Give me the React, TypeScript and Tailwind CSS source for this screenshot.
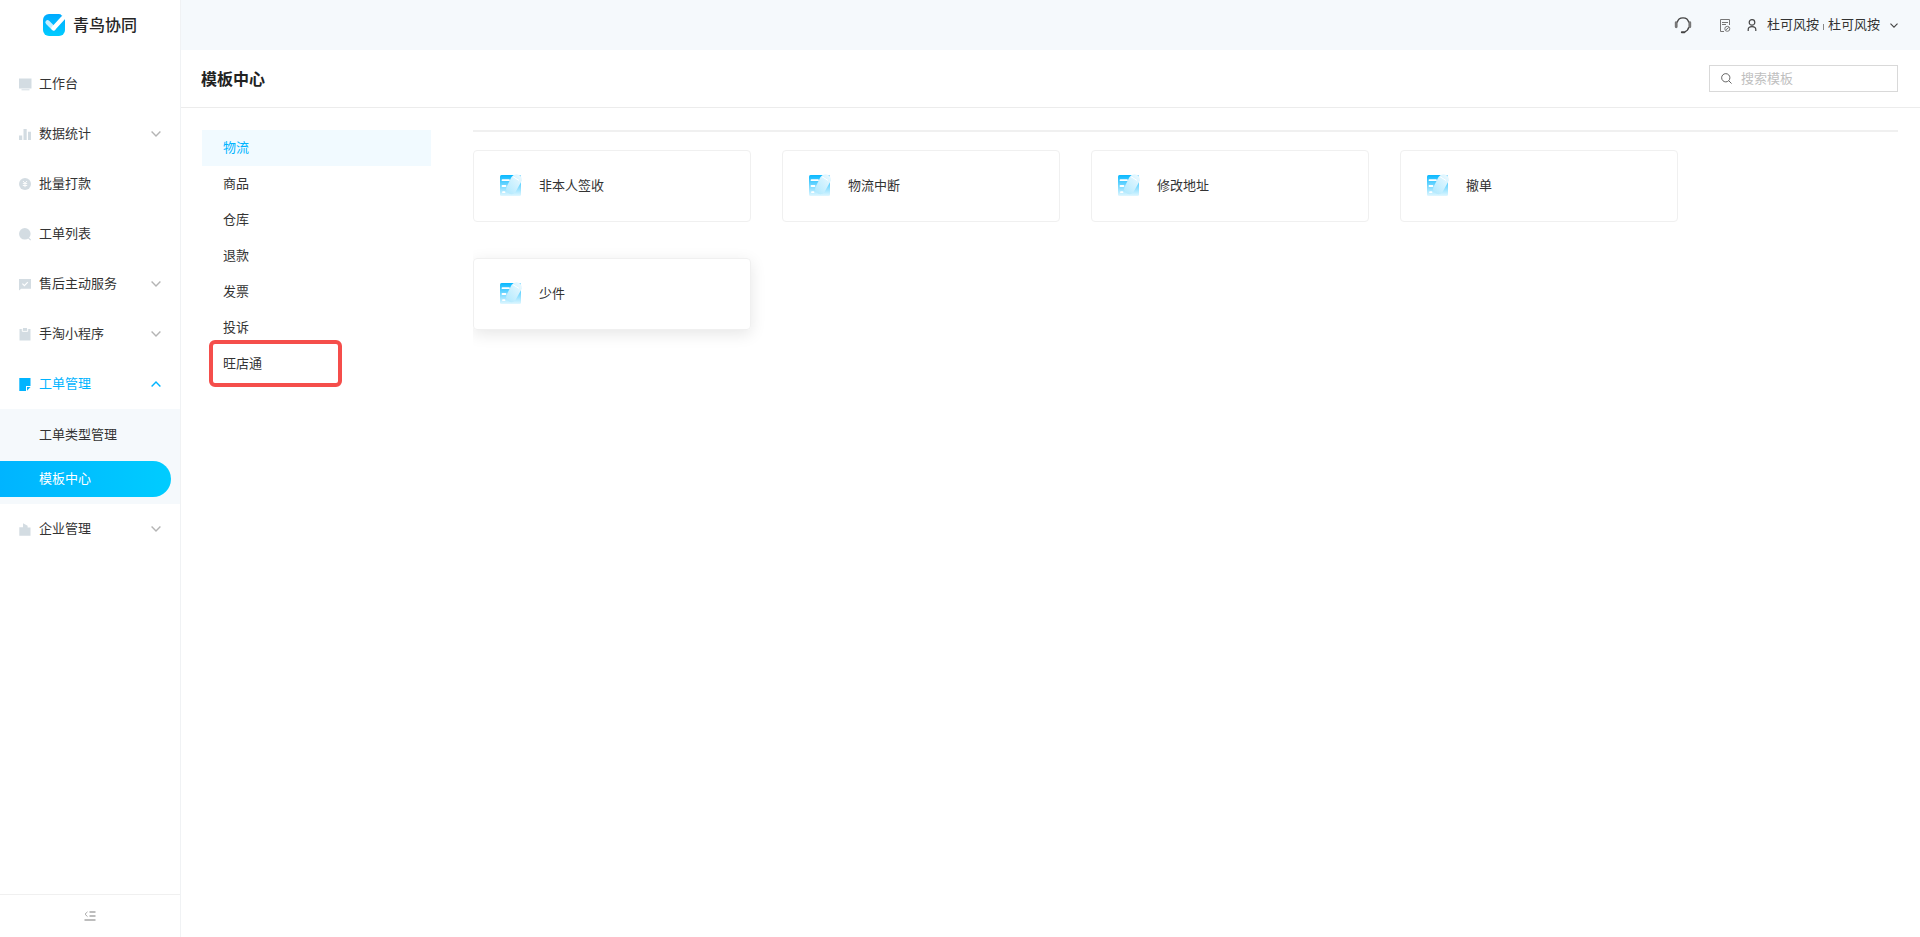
import { useState, type ReactNode } from "react";
import clsx from "clsx";

type MenuItem = {
  name: string;
  icon: ReactNode;
  expandable?: boolean;
  children?: string[];
};

const menu: MenuItem[] = [
  {
    name: "工作台",
    icon: (
      <>
        <path d="M0 0.5h12.5v10H0z" />
        <path d="M2.5 11.3h8v1h-8z" />
      </>
    ),
  },
  {
    name: "数据统计",
    icon: <path d="M0 7.5h3.2v4.5H0zM4.5 1h3.2v11H4.5zM9 3.8h3v8.2H9z" />,
    expandable: true,
  },
  {
    name: "批量打款",
    icon: (
      <>
        <circle cx="6" cy="6" r="6" />
        <path
          d="M4 3l2 2.2L8 3M3.8 5.6h4.4M3.8 7.5h4.4M6 5.2v4"
          fill="none"
          stroke="#fff"
          strokeWidth="0.9"
        />
      </>
    ),
  },
  {
    name: "工单列表",
    icon: (
      <>
        <circle cx="5.8" cy="5.8" r="5.8" />
        <path d="M9.2 9.6l2.5 2.5" stroke="currentColor" strokeWidth="1.2" />
      </>
    ),
  },
  {
    name: "售后主动服务",
    icon: (
      <>
        <path d="M0 1h12v9.8H2.2L0 12.4z" />
        <path
          d="M3.4 5.6l2 2 3.4-3.4"
          fill="none"
          stroke="#fff"
          strokeWidth="1.2"
        />
      </>
    ),
    expandable: true,
  },
  {
    name: "手淘小程序",
    icon: (
      <>
        <path d="M0.5 1h11v11.5h-11z" />
        <path d="M3.3 0.5v2.8h5.4V0.5" fill="none" stroke="#fff" />
        <path d="M4 0h4v2.4H4z" />
      </>
    ),
    expandable: true,
  },
  {
    name: "工单管理",
    icon: (
      <>
        <path d="M0.3 0h11.2v8H7v5H0.3z" />
        <path d="M8 9h3.5L8 12.7z" />
      </>
    ),
    expandable: true,
    children: ["工单类型管理", "模板中心"],
  },
  {
    name: "企业管理",
    icon: <path d="M0.3 4.2H4V0.2l4.6 2.6v1.6h2.9v8.4H0.3z" />,
    expandable: true,
  },
];

const templates: Record<string, string[]> = {
  物流: ["非本人签收", "物流中断", "修改地址", "撤单", "少件"],
  商品: [],
  仓库: [],
  退款: [],
  发票: [],
  投诉: [],
  旺店通: [],
};

function Chevron({ up, className }: { up?: boolean; className?: string }) {
  return (
    <svg
      viewBox="0 0 10 6"
      className={clsx("fill-none stroke-current", className)}
      strokeWidth="1.4"
    >
      <path d={up ? "M0.6 5.4L5 1l4.4 4.4" : "M0.6 0.6L5 5l4.4-4.4"} />
    </svg>
  );
}

function Logo() {
  return (
    <svg viewBox="0 0 22 22" className="size-[22px]">
      <defs>
        <linearGradient id="logo-bg" x1="0" y1="0" x2="0" y2="1">
          <stop offset="0" stopColor="#00aaff" />
          <stop offset="1" stopColor="#00ccff" />
        </linearGradient>
      </defs>
      <rect width="22" height="22" rx="6" fill="url(#logo-bg)" />
      <path
        d="M4.6 8.4l6 6"
        stroke="#c6efff"
        strokeWidth="4.4"
        strokeLinecap="round"
      />
      <path
        d="M10.6 14.2L20 4"
        stroke="#fff"
        strokeWidth="4.4"
        strokeLinecap="round"
      />
      <path d="M17.8 0H22v3.6L18 1z" fill="#fff" />
    </svg>
  );
}

function TemplateIcon() {
  return (
    <svg viewBox="0 0 22 22" className="mb-[3px] size-[22px] shrink-0">
      <defs>
        <linearGradient id="sheet" x1="0" y1="0" x2="0" y2="1">
          <stop offset="0" stopColor="#08b8ff" />
          <stop offset="1" stopColor="#e0f7ff" />
        </linearGradient>
        <linearGradient id="pen" x1="1" y1="0" x2="0" y2="1">
          <stop offset="0" stopColor="#eefaff" />
          <stop offset="1" stopColor="#aee8fe" />
        </linearGradient>
      </defs>
      <rect y="1" width="21" height="21" rx="1.5" fill="url(#sheet)" />
      <path
        d="M2.5 6.2h6.5M2.5 12h3M3 18.2h1.5"
        stroke="#fff"
        strokeWidth="1.8"
        strokeLinecap="round"
      />
      <path
        d="M11.5 3Q14-.5 18 .5T22 6.5L15.5 18Q13 21.5 9 19.5T6.5 13z"
        fill="url(#pen)"
      />
      <path d="M12.8 2.6l6.2 3.8" stroke="#fff" strokeWidth="1" />
    </svg>
  );
}

function Sidebar() {
  return (
    <aside className="flex w-[181px] shrink-0 flex-col border-r border-[#f0f2f4] bg-white">
      <div className="flex h-[50px] items-center justify-center gap-2">
        <Logo />
        <span className="pb-0.5 text-base font-medium text-[#262626]">
          青鸟协同
        </span>
      </div>
      <nav className="flex-1 pt-[9px]">
        {menu.map((item) => (
          <div key={item.name}>
            <button
              type="button"
              className={clsx(
                "flex h-[50px] w-full items-center pr-[19px] pl-[19px] text-left",
                item.children && "text-[#00b4ff]"
              )}
            >
              <svg
                viewBox="0 0 13 13"
                className={clsx(
                  "mr-[7px] size-[13px] fill-current",
                  !item.children && "text-[#d3dce2]"
                )}
              >
                {item.icon}
              </svg>
              <span className="flex-1 pb-0.5">{item.name}</span>
              {item.expandable && (
                <Chevron
                  up={!!item.children}
                  className={clsx(
                    "h-[6px] w-[10px]",
                    !item.children && "text-[#b4b4b4]"
                  )}
                />
              )}
            </button>
            {item.children && (
              <div className="bg-[#f5f9fc] pb-[7px]">
                {item.children.map((child) => (
                  <a
                    key={child}
                    href="#"
                    className={clsx(
                      "flex items-center pb-0.5 pl-[39px]",
                      child === "模板中心"
                        ? "mr-[9px] h-9 rounded-r-full bg-linear-to-r from-[#00b4ff] to-[#00ccff] text-white"
                        : "h-[52px]"
                    )}
                  >
                    {child}
                  </a>
                ))}
              </div>
            )}
          </div>
        ))}
      </nav>
      <button
        type="button"
        aria-label="收起菜单"
        className="flex h-[43px] items-center justify-center border-t border-[#f0f0f0]"
      >
        <svg
          viewBox="0 0 12 10"
          className="h-[10px] w-3 fill-none stroke-[#a8a8a8]"
        >
          <path d="M3.5 0.8L1 3.2l2.5 2.4" />
          <path d="M5.5 1h6M5.5 5h6M0.5 9h11" strokeWidth="1.4" />
        </svg>
      </button>
    </aside>
  );
}

function TopBar() {
  return (
    <header className="flex h-[50px] items-center justify-end bg-[#f5f9fc] pr-[22px]">
      <button type="button" aria-label="客服" className="mr-[27px]">
        <svg
          viewBox="0 0 18 18"
          className="h-[18px] w-[18px] fill-none stroke-[#444]"
        >
          <path
            d="M3.2 6.6a5.9 5.9 0 0 1 11.6 0M14.8 11.2a6.2 6.2 0 0 1-4 4.6"
            strokeWidth="1.3"
          />
          <path
            d="M2.2 6.6v4.2M15.8 6.6v4.2"
            stroke="#777"
            strokeWidth="2.8"
            strokeLinecap="round"
          />
          <path d="M7.8 16.3h2.6" strokeWidth="1.9" strokeLinecap="round" />
        </svg>
      </button>
      <button type="button" aria-label="日志" className="mr-4">
        <svg
          viewBox="0 0 12 13"
          className="h-[13px] w-3 fill-none stroke-[#777]"
        >
          <path d="M10.5 6V0.5h-9v12H5M3 3.5h6M3 5.5h4" />
          <circle cx="8.3" cy="9.8" r="2.5" />
          <path d="M6.8 11l3-2.6" />
        </svg>
      </button>
      <button type="button" className="flex items-center">
        <svg
          viewBox="0 0 10 12"
          className="mr-[10px] h-3 w-[10px] fill-none stroke-[#444]"
          strokeWidth="1.2"
        >
          <circle cx="5" cy="3.4" r="2.8" />
          <path d="M1.2 12V10.6Q1.2 7.6 5 7.6t3.8 3V12" />
        </svg>
        <span className="pb-0.5">杜可风按</span>
        <span className="mx-1 mt-1 h-[6px] w-px bg-[#888]" />
        <span className="pb-0.5">杜可风按</span>
        <Chevron className="ml-[10px] h-[5px] w-2 text-[#444]" />
      </button>
    </header>
  );
}

function App() {
  const [category, setCategory] = useState("物流");

  return (
    <div className="flex min-h-screen bg-white font-['Noto_Sans_CJK_SC',sans-serif] text-[13px] text-[#333]">
      <Sidebar />
      <div className="flex min-w-0 flex-1 flex-col">
        <TopBar />
        <div className="flex h-[58px] items-center justify-between border-b border-[#ececec] pr-[22px] pl-5">
          <h1 className="pb-0.5 text-base font-bold text-[#222]">模板中心</h1>
          <label className="flex h-[27px] w-[189px] items-center border border-[#d9d9d9] pl-[11px]">
            <svg
              viewBox="0 0 12 12"
              className="mr-[9px] size-[11px] shrink-0 fill-none stroke-[#555]"
            >
              <circle cx="5.2" cy="5.2" r="4.5" />
              <path d="M8.5 8.5l3 3" />
            </svg>
            <input
              type="text"
              aria-label="搜索模板"
              placeholder="搜索模板"
              className="w-full min-w-0 pb-0.5 outline-none placeholder:text-[#bfbfbf]"
            />
          </label>
        </div>
        <main className="flex flex-1 pt-[22px] pr-[22px] pl-[21px]">
          <div className="mr-[42px] w-[229px] shrink-0">
            {Object.keys(templates).map((name) => (
              <div key={name} className="relative">
                <button
                  type="button"
                  onClick={() => setCategory(name)}
                  className={clsx(
                    "h-9 w-full pb-0.5 pl-[21px] text-left",
                    name === category && "bg-[#f1faff] text-[#00b4ff]"
                  )}
                >
                  {name}
                </button>
                {name === "旺店通" && (
                  <span className="pointer-events-none absolute -top-[6px] left-[7px] h-[47px] w-[133px] rounded-md border-4 border-[#f54e4b]" />
                )}
              </div>
            ))}
          </div>
          <div className="min-w-0 flex-1 overflow-hidden">
            <div className="h-[2px] bg-[#f0f0f0]" />
            <div className="flex flex-wrap gap-x-[31px] gap-y-9 pt-[18px] pb-8">
              {templates[category].map((name) => (
                <a
                  key={name}
                  href="#"
                  className={clsx(
                    "flex h-[72px] w-[278px] items-center rounded border border-[#f0f0f0] pl-[26px]",
                    name === "少件" && "shadow-[0_4px_16px_rgba(0,0,0,0.1)]"
                  )}
                >
                  <TemplateIcon />
                  <span className="ml-[17px] pb-0.5">{name}</span>
                </a>
              ))}
            </div>
          </div>
        </main>
      </div>
    </div>
  );
}

export default App;
